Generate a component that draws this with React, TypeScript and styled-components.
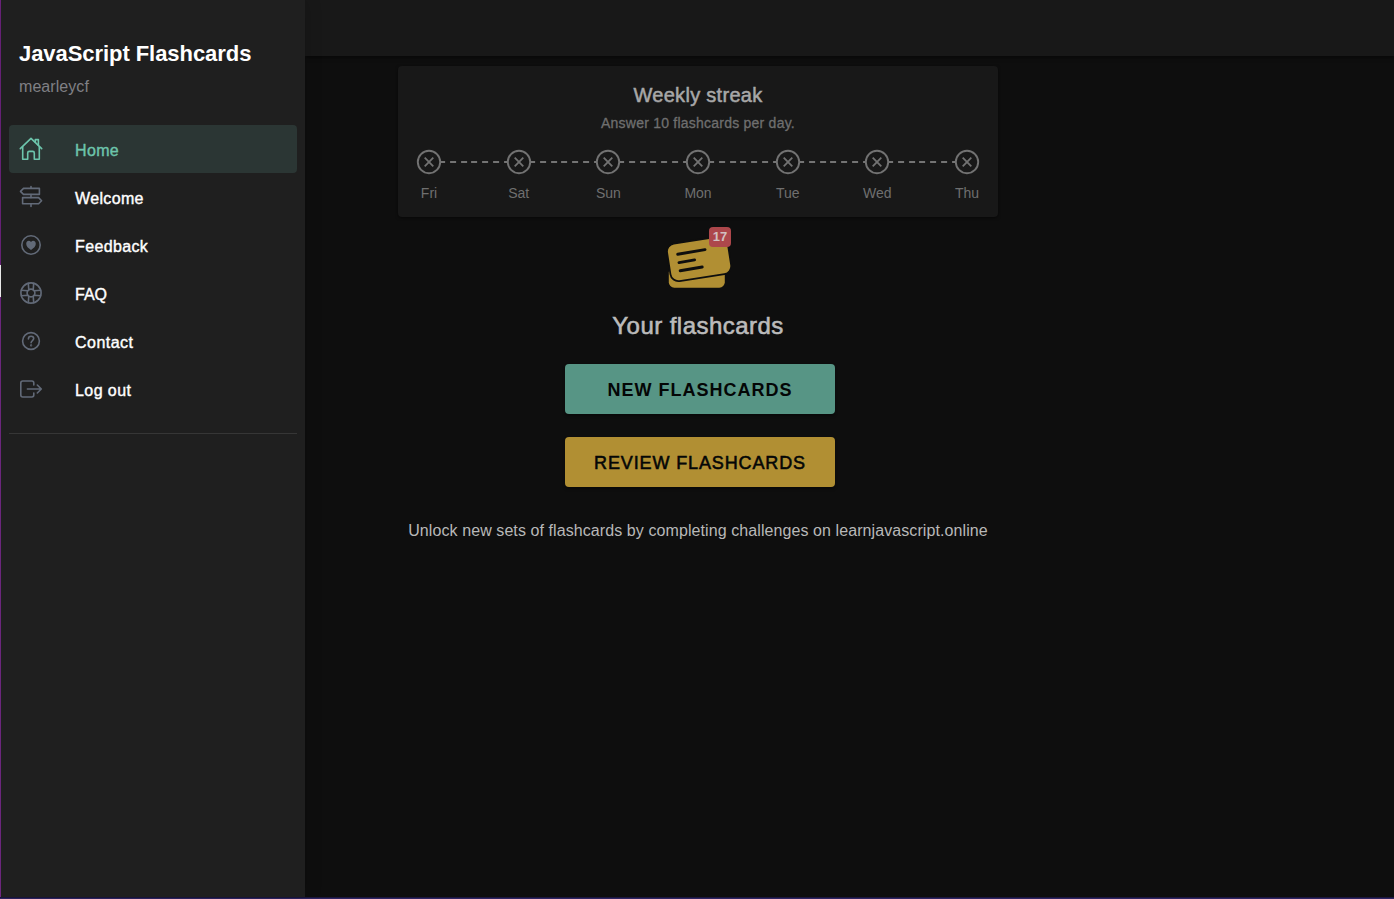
import React from "react";
import styled, { createGlobalStyle } from "styled-components";

const GlobalStyle = createGlobalStyle`
  * { box-sizing: border-box; }
  html, body { margin: 0; background: #0e0e0e; }
  body {
    font-family: "Liberation Sans", Arial, sans-serif;
    font-size: 16px;
    overflow: hidden;
  }
  h1, h2, h3, p { margin: 0; }
`;

const Page = styled.div`
  display: flex;
  flex-direction: column;
  height: 899px;
`;

const Columns = styled.div`
  display: flex;
  flex: 1;
  min-height: 0;
`;

const WindowEdge = styled.div`
  width: 1px;
  background: linear-gradient(#6f2480 265px, #fff 265px, #fff 297px, #762a88 297px);
`;

const BottomEdge = styled.div`
  height: 2px;
  background: linear-gradient(#1b173c 1px, #2e2463 1px);
`;

const Sidebar = styled.aside`
  width: 304px;
  padding: 41px 8px 0;
  background: #1f1f1f;
  box-shadow: 0 0 16px rgba(0, 0, 0, 0.18);
  z-index: 2;
`;

const AppTitle = styled.h1`
  padding: 0 10px;
  font-size: 22px;
  line-height: 26px;
  font-weight: 700;
  color: #fff;
  letter-spacing: -0.06px;
  white-space: nowrap;
`;

const UserName = styled.p`
  padding: 0 10px;
  margin: 10px 0 29px;
  line-height: 19px;
  color: #808085;
  letter-spacing: 0.06px;
`;

const Menu = styled.nav`
  display: flex;
  flex-direction: column;
  height: 309px;
  border-bottom: 1px solid #363636;
`;

const MenuItem = styled.a<{ $active?: boolean }>`
  display: flex;
  align-items: center;
  gap: 32px;
  height: 48px;
  padding: 0 10px;
  border-radius: 4px;
  color: ${(p) => (p.$active ? "#6dc5ac" : "#fff")};
  background: ${(p) => (p.$active ? "#2b3634" : "transparent")};
  svg { color: ${(p) => (p.$active ? "#6dc5ac" : "#626a78")}; }
`;

const MenuIcon = styled.svg`
  width: 24px;
  height: 24px;
  fill: none;
  stroke: currentColor;
  stroke-width: 1.6;
  stroke-linecap: round;
  stroke-linejoin: round;
`;

const MenuLabel = styled.span<{ $spacing: number }>`
  padding-top: 4px;
  line-height: 18px;
  -webkit-text-stroke: 0.4px currentColor;
  letter-spacing: ${(p) => p.$spacing}px;
`;

const Main = styled.main`
  flex: 1;
  display: flex;
  flex-direction: column;
`;

const Header = styled.header`
  height: 56px;
  background: #181818;
  box-shadow: 0 1px 4px rgba(0, 0, 0, 0.6);
`;

const Content = styled.section`
  display: flex;
  flex-direction: column;
  align-items: center;
  width: 600px;
  margin: 10px 0 0 93px;
`;

const StreakCard = styled.section`
  width: 600px;
  height: 151px;
  padding: 18px 22px 0;
  border-radius: 4px;
  background: #181818;
  box-shadow: 0 1px 3px rgba(0, 0, 0, 0.55);
  text-align: center;
`;

const StreakTitle = styled.h2`
  font-size: 20px;
  line-height: 23px;
  font-weight: 400;
  color: #a8a8a8;
  -webkit-text-stroke: 0.5px currentColor;
  letter-spacing: 0.3px;
`;

const StreakHint = styled.p`
  margin: 8px 0 18px;
  font-size: 14px;
  line-height: 16px;
  color: #6f6f6f;
  -webkit-text-stroke: 0.3px currentColor;
  letter-spacing: 0.23px;
`;

const Week = styled.div`
  display: flex;
  align-items: flex-start;
`;

const Day = styled.div`
  display: flex;
  flex-direction: column;
  align-items: center;
  gap: 10px;
  width: 18px;
  font-size: 14px;
  line-height: 16px;
  color: #6f6f6f;
  z-index: 1;
`;

const DayMark = styled.svg`
  flex: none;
  width: 26px;
  height: 26px;
  fill: #181818;
  stroke: #727272;
`;

const DayLabel = styled.span`
  white-space: nowrap;
`;

const Connector = styled.div`
  flex: 1;
  height: 2px;
  margin-top: 12px;
  background: repeating-linear-gradient(90deg, #747474 0 5.9px, transparent 5.9px 10.8px) 1.1px 0;
`;

const Deck = styled.div`
  position: relative;
  width: 66px;
  height: 62px;
  margin: 10px 0 23px;
`;

const DeckArt = styled.svg`
  display: block;
  width: 66px;
  height: 62px;
`;

const Badge = styled.span`
  position: absolute;
  top: 0;
  right: 0;
  width: 22px;
  height: 20px;
  border-radius: 4px;
  background: #ad474b;
  color: #d2c0c0;
  font-size: 13px;
  line-height: 20px;
  font-weight: 700;
  text-align: center;
`;

const DeckTitle = styled.h2`
  margin-bottom: 24px;
  font-size: 24px;
  line-height: 28px;
  font-weight: 400;
  color: #bbb;
  -webkit-text-stroke: 0.6px currentColor;
  letter-spacing: 0.45px;
`;

const ActionButton = styled.button<{ $tone: string; $strong?: boolean }>`
  width: 270px;
  height: 50px;
  margin: 0 0 23px 4px;
  padding: 2px 0 0;
  border: 0;
  border-radius: 4px;
  background: ${(p) => p.$tone};
  box-shadow: 0 2px 3px rgba(0, 0, 0, 0.4);
  color: #040606;
  font-family: inherit;
  font-size: 18px;
  font-weight: ${(p) => (p.$strong ? 700 : 400)};
  letter-spacing: ${(p) => (p.$strong ? 1 : 0.87)}px;
  -webkit-text-stroke: ${(p) => (p.$strong ? 0 : 0.55)}px currentColor;
`;

const UnlockText = styled.p`
  margin-top: 11px;
  line-height: 19px;
  color: #b8b8b8;
  white-space: nowrap;
  letter-spacing: 0.085px;
`;

const menu = [
  {
    label: "Home",
    spacing: 0.35,
    icon: (
      <>
        <path d="M1.3 11.7 12 1.4l10.7 10.3" />
        <path d="M3.7 9.7v12.6h5v-6.4q0-1.5 1.5-1.5h3.6q1.5 0 1.5 1.5v6.4h5V9.7" />
        <path d="M16.3 5.3V2.6h3.1v5.7" />
      </>
    ),
  },
  {
    label: "Welcome",
    spacing: 0.35,
    icon: (
      <>
        <path d="M12 1.5v1.8M12 9.6v3M12 19v2.5" />
        <path d="M20.4 3.4H4.5L1.5 6.4l3 3h15.9z" />
        <path d="M3.6 12.6h16l3 3.1-3 3.1h-16z" />
      </>
    ),
  },
  {
    label: "Feedback",
    spacing: 0.37,
    icon: (
      <>
        <circle cx="12" cy="12" r="9.2" />
        <path
          fill="currentColor"
          stroke="none"
          d="M12 17.1C9.2 15.2 7.2 13.3 7.2 10.8c0-3 3.2-4 4.8-1.8 1.6-2.2 4.8-1.2 4.8 1.8 0 2.5-2 4.4-4.8 6.3z"
        />
      </>
    ),
  },
  {
    label: "FAQ",
    spacing: 0,
    icon: (
      <>
        <circle cx="12" cy="12" r="10.1" />
        <circle cx="12" cy="12" r="3.9" />
        <path d="M9.3 2.4 9.8 9M14.7 2.4 14.2 9M9.8 15l-.5 6.6M14.2 15l.5 6.6M2.4 9.3 9 9.8M2.4 14.7 9 14.2M15 9.8l6.6-.5M15 14.2l6.6.5" />
      </>
    ),
  },
  {
    label: "Contact",
    spacing: 0.48,
    icon: (
      <>
        <circle cx="12" cy="12" r="8.4" />
        <path d="M9.4 9.9c0-1.6 1.1-2.6 2.7-2.6s2.6 1 2.6 2.3c0 1.9-2.6 2-2.6 4.2" />
        <circle cx="12.1" cy="16.4" r="0.35" />
      </>
    ),
  },
  {
    label: "Log out",
    spacing: 0.42,
    icon: (
      <>
        <path d="M14.8 8V5.9q0-1.9-1.9-1.9H3.8q-2 0-2 2v12q0 2 2 2h9.1q1.9 0 1.9-1.9V16" />
        <path d="M8.4 12h13.8M18.3 8l4 4-4 4" />
      </>
    ),
  },
];

const days = ["Fri", "Sat", "Sun", "Mon", "Tue", "Wed", "Thu"];

export default function App() {
  return (
    <>
      <GlobalStyle />
      <Page>
        <Columns>
          <WindowEdge />
          <Sidebar>
            <AppTitle>JavaScript Flashcards</AppTitle>
            <UserName>mearleycf</UserName>
            <Menu>
              {menu.map((item, i) => (
                <MenuItem key={item.label} $active={i === 0}>
                  <MenuIcon viewBox="0 0 24 24">{item.icon}</MenuIcon>
                  <MenuLabel $spacing={item.spacing}>{item.label}</MenuLabel>
                </MenuItem>
              ))}
            </Menu>
          </Sidebar>
          <Main>
            <Header />
            <Content>
              <StreakCard>
                <StreakTitle>Weekly streak</StreakTitle>
                <StreakHint>Answer 10 flashcards per day.</StreakHint>
                <Week>
                  {days.map((day, i) => (
                    <React.Fragment key={day}>
                      {i > 0 && <Connector />}
                      <Day>
                        <DayMark viewBox="0 0 26 26">
                          <circle cx="13" cy="13" r="11.2" strokeWidth="1.9" />
                          <path d="M8.7 8.7l8.6 8.6M17.3 8.7l-8.6 8.6" strokeWidth="1.8" />
                        </DayMark>
                        <DayLabel>{day}</DayLabel>
                      </Day>
                    </React.Fragment>
                  ))}
                </Week>
              </StreakCard>
              <Deck>
                <DeckArt viewBox="0 0 66 62">
                  <rect x="3.8" y="40" width="56" height="20.7" rx="5.5" fill="#b18f33" />
                  <rect
                    x="3.4"
                    y="12.8"
                    width="61.4"
                    height="38"
                    rx="8"
                    transform="rotate(-8.8 34.1 31.8)"
                    fill="#b18f33"
                    stroke="#0e0e0e"
                    strokeWidth="1.8"
                  />
                  <path
                    d="M12.7 27.3 40 22.6M14 35.6l15.6-2.7M15.2 43.7l22-3.7"
                    stroke="#0e0e0e"
                    strokeWidth="2.9"
                    strokeLinecap="round"
                  />
                </DeckArt>
                <Badge>17</Badge>
              </Deck>
              <DeckTitle>Your flashcards</DeckTitle>
              <ActionButton $tone="#579585" $strong>NEW FLASHCARDS</ActionButton>
              <ActionButton $tone="#b18f33">REVIEW FLASHCARDS</ActionButton>
              <UnlockText>
                Unlock new sets of flashcards by completing challenges on learnjavascript.online
              </UnlockText>
            </Content>
          </Main>
        </Columns>
        <BottomEdge />
      </Page>
    </>
  );
}
